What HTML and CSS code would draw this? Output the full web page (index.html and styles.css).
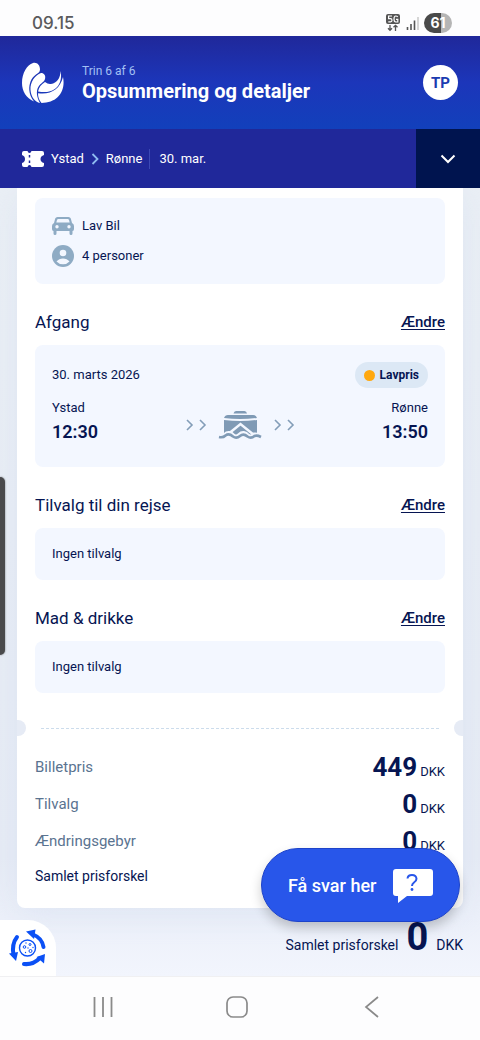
FILE: index.html
```html
<!DOCTYPE html>
<html lang="da">
<head>
<meta charset="utf-8">
<meta name="viewport" content="width=device-width, initial-scale=1">
<title>Opsummering og detaljer</title>
<link rel="stylesheet" href="styles.css">
</head>
<body>
<div class="statusbar">
  <span class="clock">09.15</span>
  <span class="status-icons">
    <svg width="16" height="18" viewBox="0 0 16 18" role="img" aria-label="5G">
      <rect x="1" y="0" width="14" height="10" rx="2" fill="#555"/>
      <path d="M7 2H3.600V4.600H5.500Q7 4.700 7 6.200T5.500 7.800H3.300M12.800 2.800Q12 2 10.800 2 9 2 9 5T10.800 8H12.800V5.300H11" fill="none" stroke="#fff" stroke-width="1.200"/>
      <path d="M5 11V16M3 14.200L5 16.300 7 14.200M10.500 17V11.500M8.500 13.300L10.500 11.300 12.500 13.300" fill="none" stroke="#555" stroke-width="1.300"/>
    </svg>
    <svg width="13" height="14" viewBox="0 0 13 14" aria-hidden="true">
      <path d="M1.500 11V14M5 8V14M8.500 4.500V14" stroke="#555" stroke-width="1.600"/>
      <path d="M12 1V14" stroke="#ccc" stroke-width="1.600"/>
    </svg>
    <span class="battery">61</span>
  </span>
</div>

<header class="header">
  <svg class="logo" width="44" height="42" viewBox="0 0 44 42" role="img" aria-label="Logo">
    <g fill="#fff">
      <path d="M12 1C16 0 19 3 19 7.500 19 10 17 11 15 12.500 10 16 8 22 8.300 28 8.600 32 10 36 13 39.500 5 36 1 29 1 21 1 11 6 3 12 1Z"/>
      <path d="M20 11C23 11 25 13.500 24 17 23 20.500 19.500 21 17.300 25 15 29 15.500 35 19 41 14 40 10 35 9.500 28 9 20 14 13 20 11Z"/>
      <path d="M17 29.500C18 25 20 22.500 24 20Q27 22.500 30 22C36 21 39.500 16 39.500 9 42 20 36 30 24 30Q20 30 17 29.500Z"/>
      <path d="M17 31.200C30 33 39 27 42 15 45 30 36 41 20.500 41 18 38 17 35 17 31.200Z"/>
    </g>
  </svg>
  <div class="titles">
    <p class="step">Trin 6 af 6</p>
    <h1 class="title">Opsummering og detaljer</h1>
  </div>
  <button class="avatar" type="button">TP</button>
</header>

<div class="trip">
  <div class="trip-info">
    <svg class="ticket" width="22" height="16" viewBox="0 0 22 16" aria-hidden="true">
      <path d="M2 0H5.500Q6 2 7.500 2T9.500 0H20Q22 0 22 2V4Q18.500 5 18.500 8T22 12V14Q22 16 20 16H9.500Q9 14 7.500 14T5.500 16H2Q0 16 0 14V12Q3 11 3 8T0 4V2Q0 0 2 0Z" fill="#fff"/>
      <path d="M7.500 4V6.500M7.500 9.500V12" stroke="#20289a" stroke-width="1.500"/>
    </svg>
    <span>Ystad</span>
    <svg class="arrow" width="8" height="12" viewBox="0 0 8 12" aria-hidden="true"><path d="M1.500 1L6.500 6 1.500 11" fill="none" stroke="#8fbcf0" stroke-width="1.800"/></svg>
    <span>Rønne</span>
    <span class="trip-date">30. mar.</span>
  </div>
  <button class="trip-toggle" type="button" aria-label="Vis rejse">
    <svg width="16" height="10" viewBox="0 0 16 10" aria-hidden="true"><path d="M1.500 1.500L8 8 14.500 1.500" fill="none" stroke="#fff" stroke-width="2"/></svg>
  </button>
</div>

<main class="page">
  <div class="card">
    <ul class="box summary">
      <li>
        <svg width="22" height="18" viewBox="0 0 22 18" aria-hidden="true">
          <path fill="#8eabc4" fill-rule="evenodd" d="M5.500 0H16.500Q18.300 0 18.800 1.600L20 6Q22 7 22 9V12Q22 14 20.500 14V16.500Q20.500 18 19 18T17.500 16.500V14H4.500V16.500Q4.500 18 3 18T1.500 16.500V14Q0 14 0 12V9Q0 7 2 6L3.200 1.600Q3.700 0 5.500 0ZM6.300 2Q5.300 2 5 3L4.300 5.500H17.700L17 3Q16.700 2 15.700 2ZM5 8A1.700 1.700 0 1 0 5 11.400 1.700 1.700 0 1 0 5 8ZM17 8A1.700 1.700 0 1 0 17 11.400 1.700 1.700 0 1 0 17 8Z"/>
        </svg>
        Lav Bil
      </li>
      <li>
        <svg width="22" height="22" viewBox="0 0 22 22" aria-hidden="true">
          <circle cx="11" cy="11" r="11" fill="#8eabc4"/>
          <circle cx="11" cy="8" r="3.300" fill="#f3f7ff"/>
          <path d="M4.500 16.500Q7 13.500 11 13.500T17.500 16.500Q15 19.300 11 19.300T4.500 16.500Z" fill="#f3f7ff"/>
        </svg>
        4 personer
      </li>
    </ul>

    <section>
      <div class="section-head"><h2>Afgang</h2><a href="#afgang">Ændre</a></div>
      <div class="box departure" id="afgang">
        <div class="departure-top">
          <span>30. marts 2026</span>
          <span class="badge">Lavpris</span>
        </div>
        <div class="route">
          <div class="stop"><span>Ystad</span><strong>12:30</strong></div>
          <div class="sailing" aria-hidden="true">
            <svg width="22" height="12" viewBox="0 0 22 12"><path d="M2 1L7 6 2 11M15 1L20 6 15 11" fill="none" stroke="#839db8" stroke-width="1.600"/></svg>
            <svg width="44" height="30" viewBox="0 0 44 30">
              <g fill="#7f9ab5">
                <path d="M15.500 3.500Q16 1 18 1H26.500Q28.500 1 29 3.500Z"/>
                <path d="M6 8Q7 5 10 5H35Q38 5 39 8Q22 10 6 8Z"/>
                <path d="M6 10Q22 12 39 10V25H6Z"/>
              </g>
              <path d="M9 25L22.500 14 36 25" fill="none" stroke="#f3f7ff" stroke-width="2.500"/>
              <path d="M1 27Q5 28 7.500 25.500 11 22 15 26.500 18.500 29 22 25.500 25.500 22 29.500 26.500 33 29 36.500 25.500 39 25 43 27" fill="none" stroke="#f3f7ff" stroke-width="6"/>
              <path d="M1 27Q5 28 7.500 25.500 11 23 15 26.500 18.500 29 22 26 25.500 23 29.500 26.500 33 29 36.500 26 39 25 43 27" fill="none" stroke="#7f9ab5" stroke-width="2.600"/>
            </svg>
            <svg width="22" height="12" viewBox="0 0 22 12"><path d="M2 1L7 6 2 11M15 1L20 6 15 11" fill="none" stroke="#839db8" stroke-width="1.600"/></svg>
          </div>
          <div class="stop stop-end"><span>Rønne</span><strong>13:50</strong></div>
        </div>
      </div>
    </section>

    <section>
      <div class="section-head"><h2>Tilvalg til din rejse</h2><a href="#tilvalg">Ændre</a></div>
      <p class="box note" id="tilvalg">Ingen tilvalg</p>
    </section>

    <section>
      <div class="section-head"><h2>Mad &amp; drikke</h2><a href="#mad">Ændre</a></div>
      <p class="box note" id="mad">Ingen tilvalg</p>
    </section>

    <div class="tear"><i class="notch"></i><i class="dots"></i><i class="notch notch-end"></i></div>

    <dl class="prices">
      <div class="price"><dt>Billetpris</dt><dd><b>449</b>DKK</dd></div>
      <div class="price"><dt>Tilvalg</dt><dd><b>0</b>DKK</dd></div>
      <div class="price"><dt>Ændringsgebyr</dt><dd><b>0</b>DKK</dd></div>
      <div class="price price-sum"><dt>Samlet prisforskel</dt></div>
    </dl>
  </div>

  <div class="total"><span>Samlet prisforskel</span><b>0</b><span>DKK</span></div>

  <button class="cookie" type="button" aria-label="Cookies">
    <svg width="38" height="38" viewBox="0 0 38 38" aria-hidden="true">
      <g fill="none" stroke="#0b50f5" stroke-width="4" stroke-linecap="round">
        <path d="M24 5.500Q33 9 34.500 18"/>
        <path d="M15 35Q24 36 31 29"/>
        <path d="M8 8Q2.500 15 4.500 26"/>
      </g>
      <g fill="#0b50f5">
        <path d="M17 2.500L26.500.500 25 10Z"/>
        <path d="M36 25L35 34.500 27.500 28Z"/>
        <path d="M0 24.500L9 23 7 32Z"/>
      </g>
      <circle cx="18.500" cy="19" r="8" fill="none" stroke="#0b50f5" stroke-width="1.400"/>
      <g fill="none" stroke="#0b50f5"><circle cx="15.500" cy="18" r="1.300"/><circle cx="21" cy="15.500" r="1"/><circle cx="21.500" cy="22" r="1.500"/></g>
      <g fill="#0b50f5"><circle cx="17" cy="14" r=".7"/><circle cx="19" cy="19" r=".7"/><circle cx="16.500" cy="23.500" r=".7"/><circle cx="24" cy="18.500" r=".7"/></g>
    </svg>
  </button>
  <button class="chat" type="button">
    Få svar her
    <svg width="40" height="34" viewBox="0 0 40 34" aria-hidden="true">
      <path d="M3 0H37Q40 0 40 3V24Q40 27 37 27H14L5 34V27H3Q0 27 0 24V3Q0 0 3 0Z" fill="#fff"/>
      <path d="M14.500 9.500Q14.800 6 19 6T23.500 9.800Q23.500 12 21 13.500 19 15 19 17" fill="none" stroke="#2856ea" stroke-width="2"/>
      <circle cx="19" cy="20.500" r="1.400" fill="#2856ea"/>
    </svg>
  </button>
</main>

<nav class="navbar">
  <button type="button" aria-label="Seneste"><svg width="22" height="22" viewBox="0 0 22 22"><path d="M2.500 1V21M11 1V21M19.500 1V21" stroke="#8a8a8a" stroke-width="1.800"/></svg></button>
  <button type="button" aria-label="Hjem"><svg width="22" height="22" viewBox="0 0 22 22"><rect x="1" y="1" width="20" height="20" rx="6" fill="none" stroke="#8a8a8a" stroke-width="1.700"/></svg></button>
  <button type="button" aria-label="Tilbage"><svg width="22" height="22" viewBox="0 0 22 22"><path d="M17 1L5 11 17 21" fill="none" stroke="#8a8a8a" stroke-width="1.700"/></svg></button>
</nav>
<div class="edge-handle"></div>
</body>
</html>
```
FILE: styles.css
```css
* { box-sizing: border-box; margin: 0; padding: 0; }
body {
  position: relative;
  min-height: 100vh;
  display: flex;
  flex-direction: column;
  background: #fdfdfe;
  color: #061552;
  font: 13px/20px Roboto, "Liberation Sans", sans-serif;
}
button { border: 0; background: none; font: inherit; color: inherit; cursor: pointer; }
svg { display: block; flex: none; }

.statusbar {
  height: 36px;
  padding: 10px 28px 0 32px;
  display: flex;
  align-items: center;
  justify-content: space-between;
}
.clock { font: 500 17px/20px Inter, sans-serif; color: #5a5a5c; }
.status-icons { display: flex; align-items: center; gap: 5px; }
.battery {
  width: 28px;
  border-radius: 10px;
  background: linear-gradient(90deg, #4a4a4a 60%, #b5b5b5 60%);
  color: #fff;
  font: 700 14px/20px Inter, sans-serif;
  text-align: center;
}

.header {
  height: 93px;
  padding: 0 22px 0 21px;
  display: flex;
  align-items: center;
  gap: 17px;
  background: linear-gradient(#20289a, #1c36ba 50%, #1240bb);
  color: #fff;
}
.titles { flex: 1; }
.step { font-size: 12px; line-height: 16px; color: #a3c0f4; }
.title { font-size: 20px; line-height: 24px; font-weight: 700; }
.avatar {
  width: 35px;
  height: 35px;
  border-radius: 50%;
  background: #fff;
  color: #1b3bb0;
  font-size: 15px;
  font-weight: 700;
}

.trip {
  position: relative;
  z-index: 1;
  height: 59px;
  display: flex;
  background: #20289a;
  color: #fff;
}
.trip-info { flex: 1; display: flex; align-items: center; padding-left: 22px; gap: 7px; }
.trip-date { padding-left: 9px; border-left: 1px solid #3c49b5; }
.trip-toggle { width: 64px; background: #00144f; display: grid; place-items: center; }

.page {
  position: relative;
  flex: 1;
  padding: 0 17px;
  background: linear-gradient(#eaeff5, #e6ebf5 85%, #f2f5fd);
}
.card {
  padding: 10px 18px 16px;
  border-radius: 0 0 8px 8px;
  background: #fff;
  box-shadow: 0 8px 30px #c9d4ee55;
}
.box { border-radius: 8px; background: #f3f7ff; padding: 16px 17px; }
.summary { list-style: none; padding: 13px 17px; }
.summary li { height: 30px; display: flex; align-items: center; gap: 8px; }
.section-head {
  display: flex;
  justify-content: space-between;
  padding: 26px 0 11px;
  line-height: 24px;
}
.section-head h2 { font-size: 17px; font-weight: 400; }
.section-head a { color: inherit; font-size: 15px; font-weight: 500; text-underline-offset: 2px; }
.departure { padding: 17px 17px 21px; }
.departure-top { display: flex; justify-content: space-between; align-items: center; }
.badge {
  display: flex;
  align-items: center;
  gap: 5px;
  padding: 0 9px;
  border-radius: 13px;
  background: #dce8f5;
  font-size: 12px;
  line-height: 26px;
  font-weight: 700;
}
.badge::before { content: ""; width: 11px; height: 11px; border-radius: 50%; background: #ffa80f; }
.route { display: grid; grid-template-columns: 1fr auto 1fr; margin-top: 10px; }
.stop strong { display: block; font-size: 18px; line-height: 28px; font-weight: 600; }
.stop-end { text-align: right; }
.sailing { display: flex; align-items: center; gap: 11px; padding-top: 5px; }

.tear { display: flex; align-items: center; margin: 27px -18px 13px; }
.notch { width: 9px; height: 16px; border-radius: 0 8px 8px 0; background: #e6ebf5; }
.notch-end { border-radius: 8px 0 0 8px; }
.dots { flex: 1; margin: 0 15px; border-top: 1px dashed #ccdcec; }
.price { display: flex; justify-content: space-between; height: 37px; line-height: 37px; }
.price dt { font-size: 15px; color: #5a7390; }
.price b { margin-right: 3px; font-size: 26px; }
.price-sum { height: 32px; line-height: 32px; }
.price-sum dt { font-size: 14px; color: #061552; }

.total { display: flex; justify-content: flex-end; align-items: baseline; gap: 8px; font-size: 14px; line-height: 58px; }
.total b { font-size: 38px; }

.cookie {
  position: absolute;
  left: 0;
  bottom: 0;
  width: 56px;
  height: 56px;
  border-radius: 0 28px 0 0;
  background: #fff;
  display: grid;
  place-items: center;
}
.chat {
  position: absolute;
  right: 20px;
  bottom: 54px;
  width: 199px;
  height: 74px;
  padding: 2px 26px 0;
  border: 1px solid #1d43c9;
  border-radius: 37px;
  background: #2856ea;
  box-shadow: 0 6px 12px #0003;
  color: #fff;
  font-size: 18px;
  font-weight: 500;
  display: flex;
  align-items: center;
  justify-content: space-between;
}

.navbar {
  height: 64px;
  padding: 0 41px 4px 36px;
  border-top: 1px solid #f0f0f2;
  display: flex;
  align-items: center;
}
.navbar button { flex: 1; display: grid; place-items: center; }
.edge-handle {
  position: absolute;
  left: 0;
  top: 477px;
  width: 5px;
  height: 178px;
  border-radius: 0 5px 5px 0;
  background: #4a4a4c;
  box-shadow: 0 0 2px #0008;
}
```
